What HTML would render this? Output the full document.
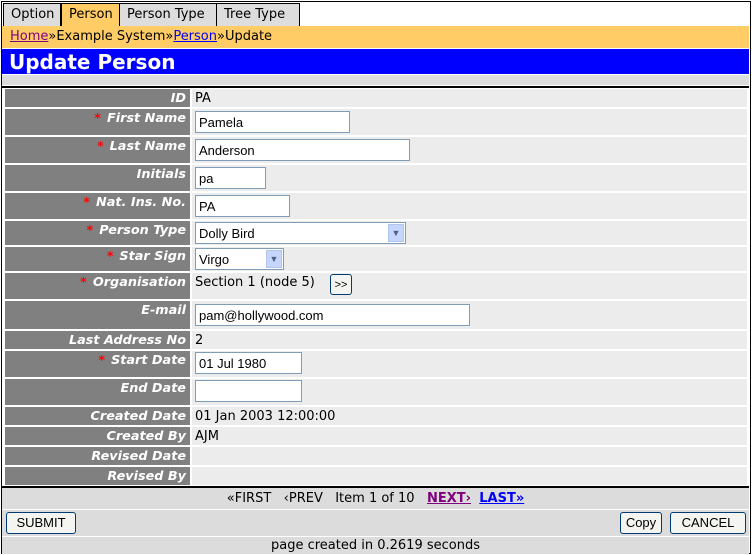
<!DOCTYPE html>
<html><head><style>
*{box-sizing:border-box;margin:0;padding:0}
body{width:752px;height:555px;background:#fff;font-family:"DejaVu Sans",Verdana,sans-serif;font-size:13px;position:relative;overflow:hidden}
.frame{position:absolute;left:1px;top:1px;width:750px;height:553px;border:1px solid #000}
.a{position:absolute}
.tab{position:absolute;top:3px;height:23px;background:#ddd;border:1px solid #000;border-bottom:none;font-size:13px;line-height:22px;padding:0 7px}
.l{position:absolute;left:5px;width:185px;background:#808080;color:#fff;font-weight:bold;font-style:italic;text-align:right;padding:2px 4px 0 0;font-size:12.8px}
.l b{color:#f00;font-style:normal;margin-right:6px}
.v{position:absolute;left:192px;width:555px;background:#ececec;padding:2px 0 0 3px}
.in{position:absolute;left:195px;height:22px;background:#fff;border:1px solid #7f9db9;font-family:"Liberation Sans",Arial,sans-serif;font-size:13px;padding:3px 0 0 3px}
.sel .arr{position:absolute;right:1px;top:1px;width:16px;height:18px;background:#c5d5fb;border:1px solid #b0c4ee;font-size:9px;color:#4d6185;text-align:center;line-height:16px}
.btn{position:absolute;height:22px;background:#f4f4f0;border:1px solid #003c74;border-radius:3px;font-family:"Liberation Sans",Arial,sans-serif;font-size:13px;text-align:center;line-height:20px}
</style></head><body>
<div class="frame"></div>
<div class="tab" style="left:3px;width:58px">Option</div>
<div class="tab" style="left:61px;width:59px;background:#ffcc66">Person</div>
<div class="tab" style="left:119px;width:98px">Person Type</div>
<div class="tab" style="left:216px;width:84px">Tree Type</div>
<div class="a" style="left:2px;top:26px;width:747px;height:22px;background:#ffcc66;font-size:13px;line-height:22px;padding-left:8px"><span style="color:#800080;text-decoration:underline">Home</span>»Example System»<span style="color:#00f;text-decoration:underline">Person</span>»Update</div>
<div class="a" style="left:2px;top:49px;width:747px;height:25px;background:#00f;color:#fff;font-weight:bold;font-size:20px;line-height:26px;padding-left:7px">Update Person</div>
<div class="a" style="left:2px;top:75px;width:747px;height:10px;background:#dcdcdc"></div>
<div class="a" style="left:2px;top:86px;width:747px;height:2px;background:#000"></div>

<div class="l" style="top:89px;height:18px">ID</div><div class="v" style="top:89px;height:18px">PA</div>
<div class="l" style="top:109px;height:26px"><b>*</b>First Name</div><div class="v" style="top:109px;height:26px"></div><div class="in" style="top:111px;width:155px">Pamela</div>
<div class="l" style="top:137px;height:26px"><b>*</b>Last Name</div><div class="v" style="top:137px;height:26px"></div><div class="in" style="top:139px;width:215px">Anderson</div>
<div class="l" style="top:165px;height:26px">Initials</div><div class="v" style="top:165px;height:26px"></div><div class="in" style="top:167px;width:71px">pa</div>
<div class="l" style="top:193px;height:26px"><b>*</b>Nat. Ins. No.</div><div class="v" style="top:193px;height:26px"></div><div class="in" style="top:195px;width:95px">PA</div>
<div class="l" style="top:221px;height:24px"><b>*</b>Person Type</div><div class="v" style="top:221px;height:24px"></div><div class="in sel" style="top:222px;width:211px">Dolly Bird<div class="arr">▼</div></div>
<div class="l" style="top:247px;height:24px"><b>*</b>Star Sign</div><div class="v" style="top:247px;height:24px"></div><div class="in sel" style="top:248px;width:89px">Virgo<div class="arr">▼</div></div>
<div class="l" style="top:273px;height:26px"><b>*</b>Organisation</div><div class="v" style="top:273px;height:26px">Section 1 (node 5)</div><div class="btn" style="left:330px;top:274px;width:22px;height:21px;font-size:11px">&gt;&gt;</div>
<div class="l" style="top:301px;height:28px">E-mail</div><div class="v" style="top:301px;height:28px"></div><div class="in" style="top:304px;width:275px">pam@hollywood.com</div>
<div class="l" style="top:331px;height:18px">Last Address No</div><div class="v" style="top:331px;height:18px">2</div>
<div class="l" style="top:351px;height:26px"><b>*</b>Start Date</div><div class="v" style="top:351px;height:26px"></div><div class="in" style="top:352px;width:107px">01 Jul 1980</div>
<div class="l" style="top:379px;height:26px">End Date</div><div class="v" style="top:379px;height:26px"></div><div class="in" style="top:380px;width:107px"></div>
<div class="l" style="top:407px;height:18px">Created Date</div><div class="v" style="top:407px;height:18px">01 Jan 2003 12:00:00</div>
<div class="l" style="top:427px;height:18px">Created By</div><div class="v" style="top:427px;height:18px">AJM</div>
<div class="l" style="top:447px;height:18px">Revised Date</div><div class="v" style="top:447px;height:18px"></div>
<div class="l" style="top:467px;height:18px">Revised By</div><div class="v" style="top:467px;height:18px"></div>

<div class="a" style="left:2px;top:486px;width:747px;height:2px;background:#000"></div>
<div class="a" style="left:2px;top:488px;width:747px;height:21px;background:#dcdcdc;text-align:center;line-height:22px;font-size:13px">«FIRST &nbsp; ‹PREV &nbsp; Item 1 of 10 &nbsp; <b style="color:#800080;text-decoration:underline">NEXT›</b> &nbsp;<b style="color:#00f;text-decoration:underline">LAST»</b></div>
<div class="a" style="left:2px;top:510px;width:747px;height:26px;background:#dcdcdc"></div>
<div class="btn" style="left:6px;top:512px;width:70px">SUBMIT</div>
<div class="btn" style="left:620px;top:512px;width:42px">Copy</div>
<div class="btn" style="left:670px;top:512px;width:76px">CANCEL</div>
<div class="a" style="left:2px;top:537px;width:747px;height:17px;background:#dcdcdc;text-align:center;line-height:17px;font-size:13px">page created in 0.2619 seconds</div>
</body></html>
